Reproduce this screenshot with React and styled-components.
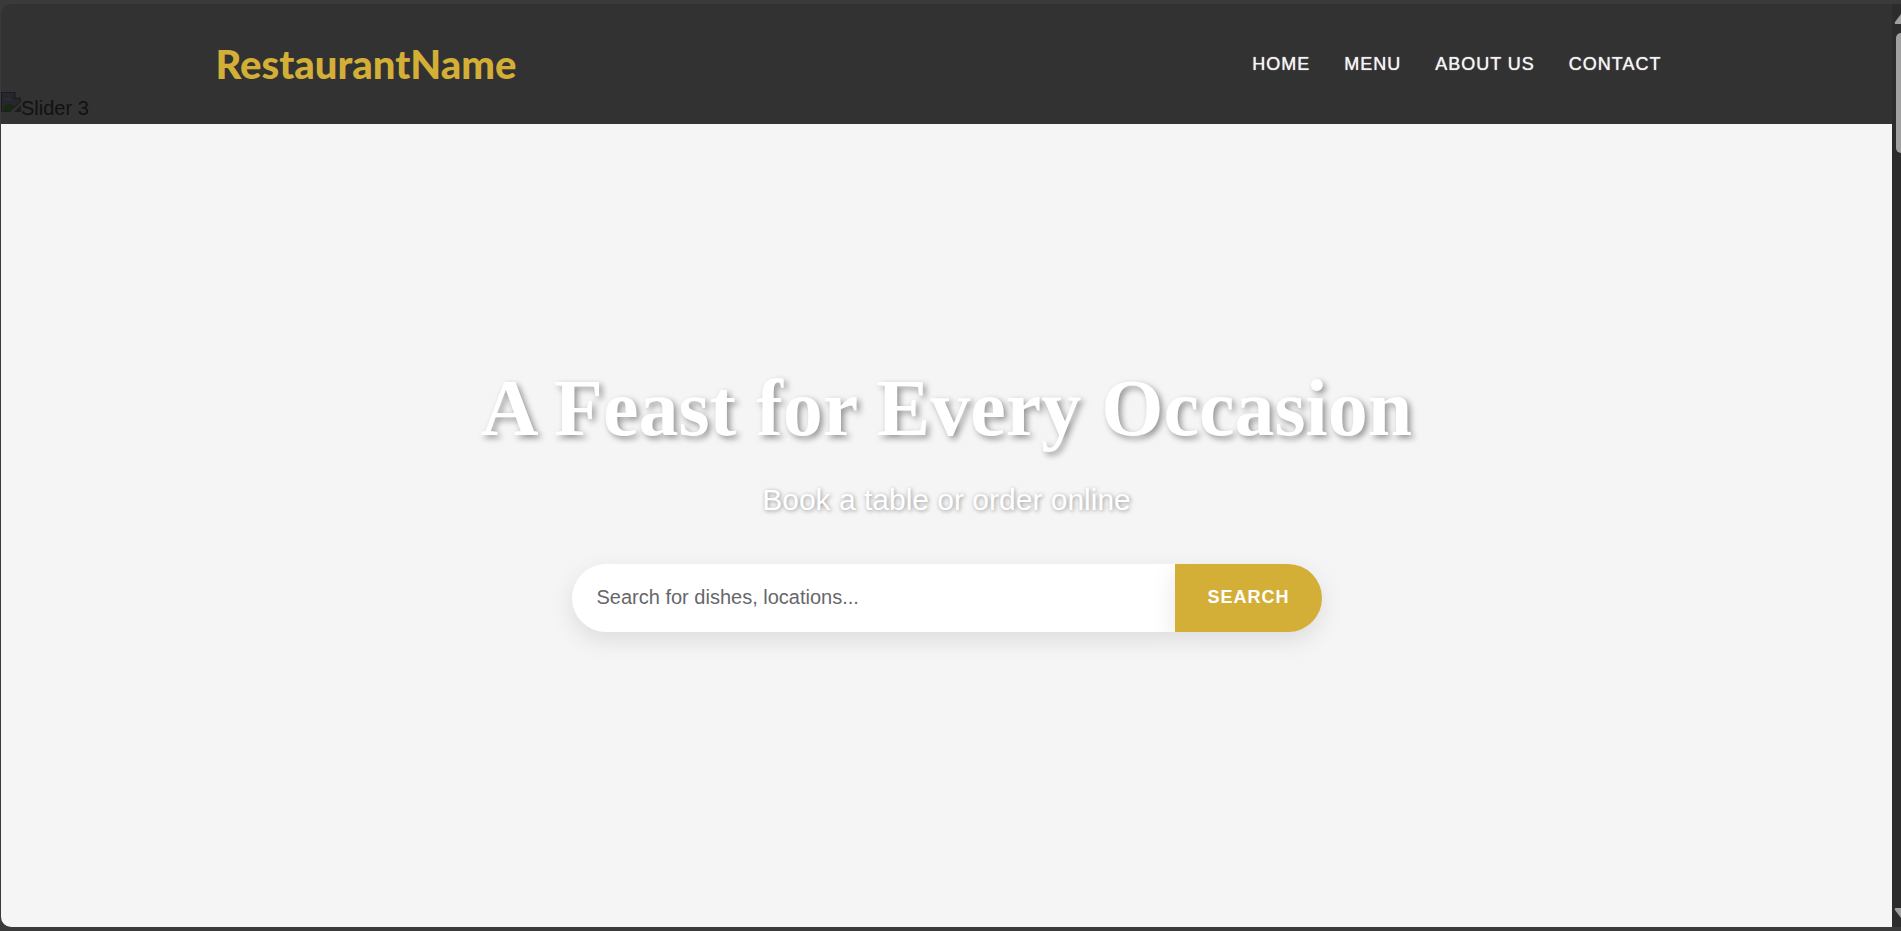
import React from "react";
import styled, { createGlobalStyle } from "styled-components";

const GlobalStyle = createGlobalStyle`
  *, *::before, *::after { box-sizing: border-box; }
  body {
    margin: 0;
    background: #3b3a3b;
    font-family: Arial, "Liberation Sans", sans-serif;
    font-size: 20px;
  }
`;

const Window = styled.div`
  display: flex;
  height: 100vh;
  padding: 4px 0 4px 1px;
  overflow: hidden;
`;

const Page = styled.div`
  flex: 1;
  display: flex;
  flex-direction: column;
  min-width: 0;
  border-radius: 10px 0 0 10px;
  overflow: hidden;
`;

const Header = styled.header`
  position: relative;
  height: 120px;
  flex: none;
  padding-right: 16px;
  background: #323232;
`;

const HeaderInner = styled.div`
  display: flex;
  align-items: center;
  justify-content: space-between;
  max-width: 1446px;
  height: 100%;
  margin: 0 auto;
`;

const Logo = styled.a`
  color: #d4af37;
  font-family: "Comic Sans MS", Lato, sans-serif;
  font-size: 40px;
  font-weight: 900;
  line-height: 56px;
  text-decoration: none;
`;

const Nav = styled.nav`
  display: flex;
  gap: 34px;
`;

const NavLink = styled.a`
  color: #f4f4f4;
  font-size: 18px;
  font-weight: 500;
  line-height: 24px;
  letter-spacing: 1px;
  text-decoration: none;
  text-shadow: 0 0 1px #f4f4f4;
  text-transform: uppercase;
`;

const SlidePlaceholder = styled.div`
  position: absolute;
  left: 0;
  bottom: 4px;
  display: flex;
  color: #111111;
  line-height: 24px;
  pointer-events: none;
`;

const SlideAlt = styled.span`
  padding-top: 4px;
`;

const Hero = styled.main`
  flex: 1;
  display: flex;
  flex-direction: column;
  align-items: center;
  justify-content: center;
  text-align: center;
  background: #f5f5f5;
  color: #ffffff;
  padding: 0 20px 60px;
`;

const Title = styled.h1`
  margin: 0 0 24px;
  font-family: "Liberation Serif", "Times New Roman", serif;
  font-size: 80px;
  font-weight: 700;
  line-height: 96px;
  text-shadow: 3px 3px 6px rgba(0, 0, 0, 0.4);
`;

const Subtitle = styled.p`
  margin: 0 0 44px;
  font-size: 30px;
  line-height: 40px;
  text-shadow: 1px 1px 4px rgba(0, 0, 0, 0.4);
`;

const SearchForm = styled.form`
  display: flex;
  width: 100%;
  max-width: 750px;
  height: 68px;
`;

const SearchInput = styled.input`
  flex: 1;
  min-width: 0;
  padding: 0 25px;
  border: 0;
  border-radius: 34px 0 0 34px;
  background: #ffffff;
  box-shadow: 0 8px 25px rgba(0, 0, 0, 0.1);
  color: #333333;
  font: inherit;
  &::placeholder { color: #67676b; opacity: 1; }
`;

const SearchButton = styled.button`
  padding: 0 32px;
  border: 0;
  border-radius: 0 34px 34px 0;
  background: #d3af37;
  box-shadow: 0 8px 25px rgba(0, 0, 0, 0.1);
  color: #ffffff;
  font-family: inherit;
  font-size: 18px;
  font-weight: 700;
  letter-spacing: 1px;
  text-transform: uppercase;
`;

const ScrollBar = styled.div`
  display: flex;
  flex-direction: column;
  justify-content: space-between;
  width: 9px;
  padding: 10px 0 9px;
  background: #2c2c2c;
`;

const ScrollThumb = styled.div`
  height: 120px;
  margin: 9px 0 auto 4px;
  border-radius: 5px 0 0 5px;
  background: #a0a0a0;
`;

const BrokenImage = () => (
  <svg width="20" height="20" viewBox="0 0 20 20" aria-hidden="true">
    <path d="M0 0h14l6 6v4L9 20H0z" fill="#1c1c1d" />
    <path d="M1 1h12v6h6v3L9 19H1z" fill="#24272d" />
    <path d="M2 19c1-5 5-8 9-6l3 1-5 5z" fill="#17290f" />
    <path d="M4 8c1-3 5-3 6 0z" fill="#2d2f33" />
    <path d="M14 0l6 6h-6z" fill="#353535" />
    <path d="M14 0v6h6" fill="none" stroke="#1d1d1d" />
    <path d="M20 13v7h-7z" fill="#1c1c1d" />
  </svg>
);

const Arrow = ({ down }) => (
  <svg width="9" height="10" viewBox="0 0 9 10" aria-hidden="true">
    <path
      d={down ? "M4 0h5v10L3 2q-1-2 1-2z" : "M9 0v10H4q-2 0-1-2z"}
      fill="#a0a0a0"
    />
  </svg>
);

const links = ["Home", "Menu", "About Us", "Contact"];

export default function App() {
  return (
    <>
      <GlobalStyle />
      <Window>
        <Page>
          <Header>
            <SlidePlaceholder>
              <BrokenImage />
              <SlideAlt>Slider 3</SlideAlt>
            </SlidePlaceholder>
            <HeaderInner>
              <Logo href="#">RestaurantName</Logo>
              <Nav>
                {links.map((label) => (
                  <NavLink key={label} href="#">{label}</NavLink>
                ))}
              </Nav>
            </HeaderInner>
          </Header>
          <Hero>
            <Title>A Feast for Every Occasion</Title>
            <Subtitle>Book a table or order online</Subtitle>
            <SearchForm onSubmit={(event) => event.preventDefault()}>
              <SearchInput
                type="text"
                aria-label="Search for dishes, locations"
                placeholder="Search for dishes, locations..."
              />
              <SearchButton type="submit">Search</SearchButton>
            </SearchForm>
          </Hero>
        </Page>
        <ScrollBar aria-hidden="true">
          <Arrow />
          <ScrollThumb />
          <Arrow down />
        </ScrollBar>
      </Window>
    </>
  );
}
